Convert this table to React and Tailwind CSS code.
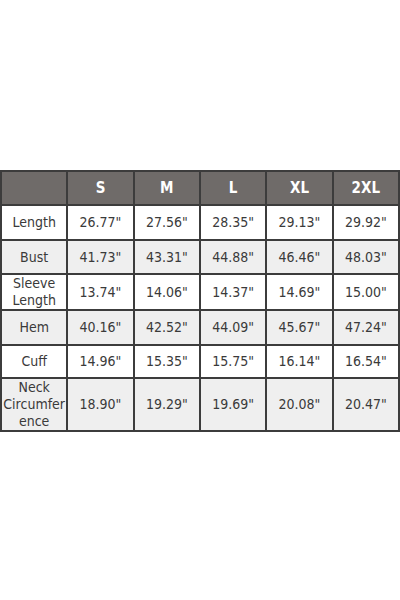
export default function App() {
  const sizes = ['S', 'M', 'L', 'XL', '2XL'];
  const rows = [
    { name: ['Length'], vals: ['26.77"', '27.56"', '28.35"', '29.13"', '29.92"'], h: 'h-[35px]', bg: 'bg-white' },
    { name: ['Bust'], vals: ['41.73"', '43.31"', '44.88"', '46.46"', '48.03"'], h: 'h-[34px]', bg: 'bg-[#efefef]' },
    { name: ['Sleeve', 'Length'], vals: ['13.74"', '14.06"', '14.37"', '14.69"', '15.00"'], h: 'h-[33px]', bg: 'bg-white' },
    { name: ['Hem'], vals: ['40.16"', '42.52"', '44.09"', '45.67"', '47.24"'], h: 'h-[35px]', bg: 'bg-[#efefef]' },
    { name: ['Cuff'], vals: ['14.96"', '15.35"', '15.75"', '16.14"', '16.54"'], h: 'h-[33px]', bg: 'bg-white' },
    { name: ['Neck', 'Circumfer', 'ence'], vals: ['18.90"', '19.29"', '19.69"', '20.08"', '20.47"'], h: 'h-[52px]', bg: 'bg-[#efefef]' },
  ];

  return (
    <div className="w-[400px] h-[600px] bg-white pt-[170px]" style={{ fontFamily: '"DejaVu Sans Condensed", "Liberation Sans", sans-serif' }}>
      <table className="w-full border-collapse table-fixed text-[14px] leading-[17px] text-[#3a3a3a]">
        <thead>
          <tr className="h-[34px] bg-[#6f6b69]">
            <th className="border-2 border-[#3c3c3c]"></th>
            {sizes.map((s) => (
              <th key={s} className="border-2 border-[#3c3c3c] text-white font-bold text-[15px] text-center">
                {s}
              </th>
            ))}
          </tr>
        </thead>
        <tbody>
          {rows.map((row) => (
            <tr key={row.name.join(' ')} className={`${row.h} ${row.bg}`}>
              <td className="border-2 border-[#3c3c3c] text-center p-0">
                {row.name.map((n) => (
                  <div key={n}>{n}</div>
                ))}
              </td>
              {row.vals.map((v, i) => (
                <td key={i} className="border-2 border-[#3c3c3c] text-center p-0">
                  {v}
                </td>
              ))}
            </tr>
          ))}
        </tbody>
      </table>
    </div>
  );
}
